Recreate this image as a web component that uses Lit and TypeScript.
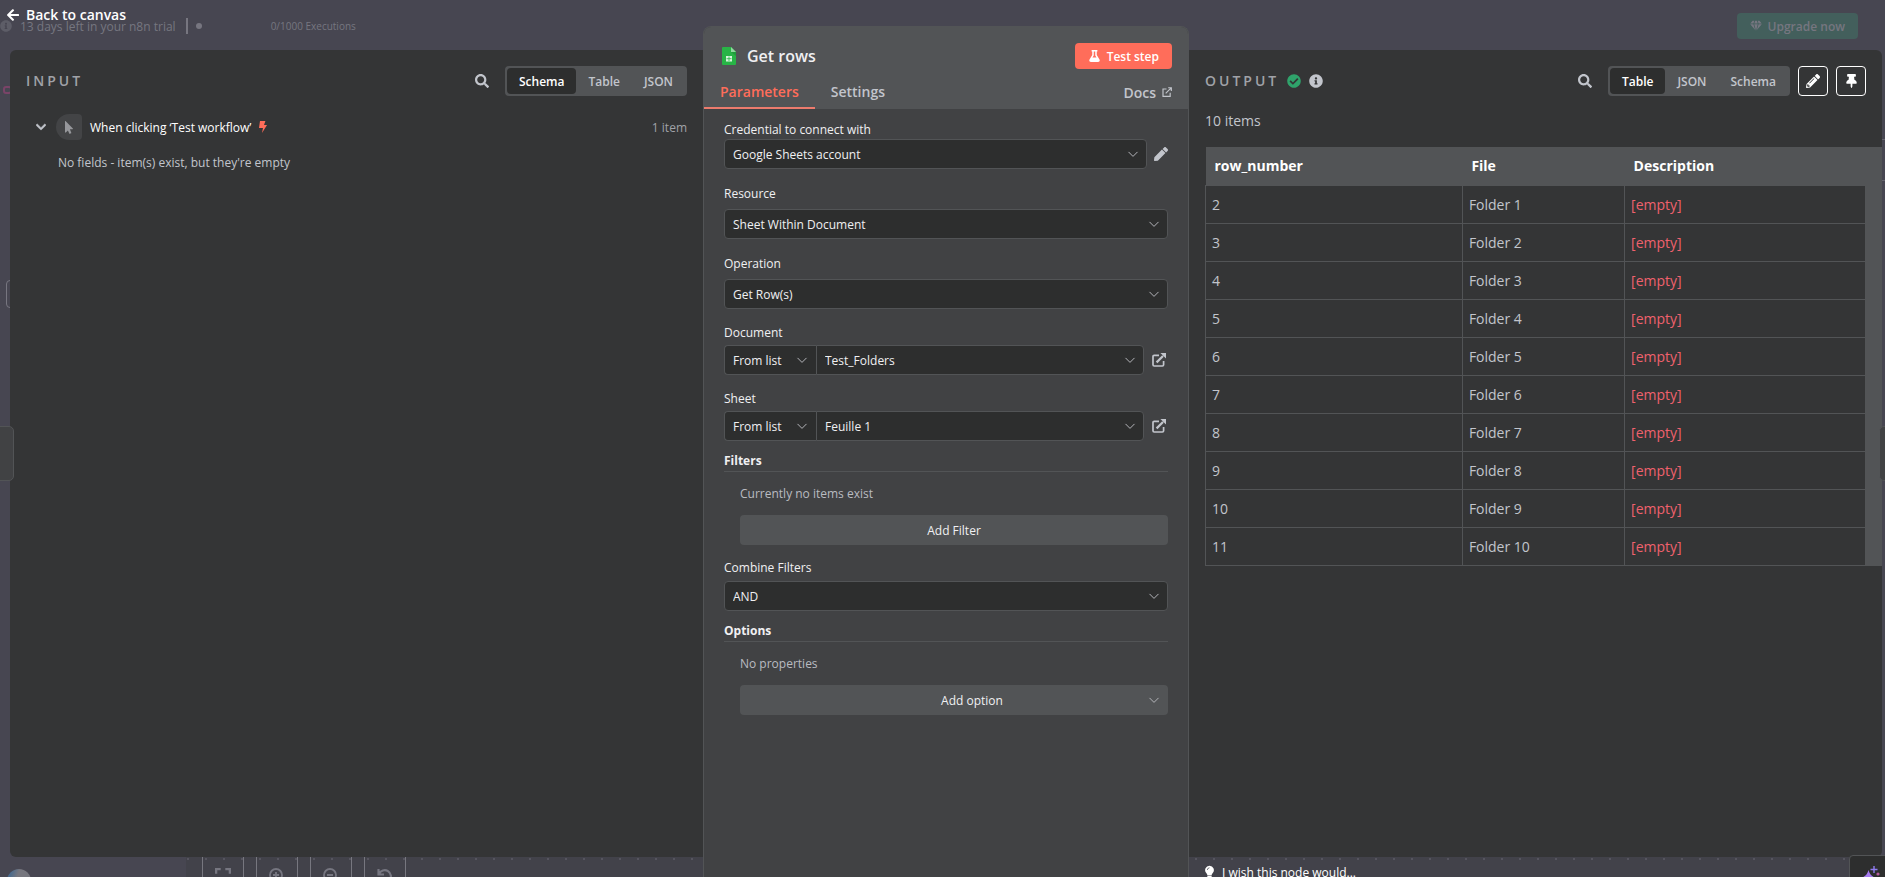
import { LitElement, html, css, svg, nothing } from "lit";
import { customElement, property, state } from "lit/decorators.js";
import { classMap } from "lit/directives/class-map.js";

const icons: Record<string, { box: string; body: unknown }> = {
  arrowLeft: {
    box: "0 0 448 512",
    body: svg`<path d="M257.5 445.1l-22.2 22.2c-9.4 9.4-24.6 9.4-33.9 0L7 273c-9.4-9.4-9.4-24.6 0-33.9L201.4 44.7c9.4-9.4 24.6-9.4 33.9 0l22.2 22.2c9.5 9.5 9.3 25-.4 34.3L136.6 216H424c13.3 0 24 10.7 24 24v32c0 13.3-10.7 24-24 24H136.6l120.5 114.8c9.8 9.3 10 24.8.4 34.3z"/>`,
  },
  search: {
    box: "0 0 512 512",
    body: svg`<path d="M505 442.7L405.3 343c-4.5-4.5-10.6-7-17-7H372c27.6-35.3 44-79.7 44-128C416 93.1 322.9 0 208 0S0 93.1 0 208s93.1 208 208 208c48.3 0 92.7-16.4 128-44v16.3c0 6.4 2.5 12.5 7 17l99.7 99.7c9.4 9.4 24.6 9.4 33.9 0l28.3-28.3c9.4-9.4 9.4-24.6.1-34zM208 336c-70.7 0-128-57.2-128-128 0-70.7 57.2-128 128-128 70.7 0 128 57.2 128 128 0 70.7-57.2 128-128 128z"/>`,
  },
  check: {
    box: "0 0 512 512",
    body: svg`<path d="M504 256c0 136.967-111.033 248-248 248S8 392.967 8 256 119.033 8 256 8s248 111.033 248 248zM227.314 387.314l184-184c6.248-6.248 6.248-16.379 0-22.627l-22.627-22.627c-6.248-6.249-16.379-6.249-22.628 0L216 308.118l-70.059-70.059c-6.248-6.248-16.379-6.248-22.628 0l-22.627 22.627c-6.248 6.248-6.248 16.379 0 22.627l104 104c6.249 6.249 16.379 6.249 22.628.001z"/>`,
  },
  info: {
    box: "0 0 512 512",
    body: svg`<path d="M256 8C119.043 8 8 119.083 8 256c0 136.997 111.043 248 248 248s248-111.003 248-248C504 119.083 392.957 8 256 8zm0 110c23.196 0 42 18.804 42 42s-18.804 42-42 42-42-18.804-42-42 18.804-42 42-42zm56 254c0 6.627-5.373 12-12 12h-88c-6.627 0-12-5.373-12-12v-24c0-6.627 5.373-12 12-12h12v-64h-12c-6.627 0-12-5.373-12-12v-24c0-6.627 5.373-12 12-12h64c6.627 0 12 5.373 12 12v100h12c6.627 0 12 5.373 12 12v24z"/>`,
  },
  pencil: {
    box: "0 0 512 512",
    body: svg`<path d="M497.9 142.1l-46.1 46.1c-4.7 4.7-12.3 4.7-17 0l-111-111c-4.7-4.7-4.7-12.3 0-17l46.1-46.1c18.7-18.7 49.1-18.7 67.9 0l60.1 60.1c18.8 18.7 18.8 49.1 0 67.9zM284.2 99.8L21.6 362.4.4 483.9c-2.9 16.4 11.4 30.6 27.8 27.8l121.5-21.3 262.6-262.6c4.7-4.7 4.7-12.3 0-17l-111-111c-4.8-4.7-12.4-4.7-17.1 0zM124.1 339.9c-5.5-5.5-5.5-14.3 0-19.8l154-154c5.5-5.5 14.3-5.5 19.8 0s5.5 14.3 0 19.8l-154 154c-5.5 5.5-14.3 5.5-19.8 0zM88 424h48v36.3l-64.5 11.3-31.1-31.1L51.7 376H88v48z"/>`,
  },
  pen: {
    box: "0 0 512 512",
    body: svg`<path d="M290.74 93.24l128.02 128.02-277.99 277.99-114.14 12.6C11.35 513.54-1.56 500.62.14 485.34l12.7-114.22 277.9-277.88zm207.2-19.06l-60.11-60.11c-18.75-18.75-49.16-18.75-67.91 0l-56.55 56.55 128.02 128.02 56.55-56.55c18.75-18.76 18.75-49.16 0-67.91z"/>`,
  },
  pin: {
    box: "0 0 384 512",
    body: svg`<path d="M298.028 214.267L285.793 96H328c13.255 0 24-10.745 24-24V24c0-13.255-10.745-24-24-24H56C42.745 0 32 10.745 32 24v48c0 13.255 10.745 24 24 24h42.207L85.972 214.267C37.465 236.82 0 277.261 0 328c0 13.255 10.745 24 24 24h136v104.007c0 1.242.289 2.467.845 3.578l24 48c2.941 5.882 11.364 5.893 14.311 0l24-48a8.008 8.008 0 0 0 .845-3.578V352h136c13.255 0 24-10.745 24-24-.001-51.183-37.983-91.42-85.973-113.733z"/>`,
  },
  flask: {
    box: "0 0 448 512",
    body: svg`<path d="M437.2 403.5L320 215V64h8c13.3 0 24-10.7 24-24V24c0-13.3-10.7-24-24-24H120c-13.3 0-24 10.7-24 24v16c0 13.3 10.7 24 24 24h8v151L10.800 403.500C-18.500 450.600 15.300 512 70.900 512h306.200c55.700 0 89.400-61.500 60.100-108.500zM137.900 320l48.200-77.600c3.700-5.200 5.800-11.600 5.800-18.400V64h64v160c0 6.900 2.200 13.200 5.800 18.400l48.200 77.600h-172z"/>`,
  },
  pointer: {
    box: "0 0 320 512",
    body: svg`<path d="M302.189 329.126H196.105l55.831 135.993c3.889 9.428-.555 19.999-9.444 23.999l-49.165 21.427c-9.165 4-19.443-.571-23.332-9.714l-53.053-129.136-86.664 89.138C18.729 472.71 0 463.554 0 447.977V18.299C0 1.899 19.921-6.096 30.277 5.443l284.412 292.542c11.472 11.179 3.007 31.141-12.5 31.141z"/>`,
  },
  chevron: {
    box: "0 0 448 512",
    body: svg`<path d="M207.029 381.476L12.686 187.132c-9.373-9.373-9.373-24.569 0-33.941l22.667-22.667c9.357-9.357 24.522-9.375 33.901-.04L224 284.505l154.745-154.021c9.379-9.335 24.544-9.317 33.901.04l22.667 22.667c9.373 9.373 9.373 24.569 0 33.941L240.971 381.476c-9.373 9.372-24.569 9.372-33.942 0z" stroke="currentColor" stroke-width="24"/>`,
  },
  caret: {
    box: "0 0 12 12",
    body: svg`<path d="M1.500 3.900l4.500 4.500 4.500-4.500" fill="none" stroke="currentColor" stroke-width="1"/>`,
  },
  bolt: { box: "0 0 8 12", body: svg`<path d="M1 0h5.400L5 4h3L3 12l1-5H0z"/>` },
  external: {
    box: "0 0 14 14",
    body: svg`<path d="M7 2.400H2.200Q1 2.400 1 3.600v8.200Q1 13 2.200 13h8.200q1.200 0 1.200-1.200V8" fill="none" stroke="currentColor" stroke-width="1.700"/><path d="M4.600 9.400l6.400-6.400" fill="none" stroke="currentColor" stroke-width="2.200"/><path d="M8.400 0H14v5.600z"/>`,
  },
  docs: {
    box: "0 0 12 12",
    body: svg`<path d="M5.400 2.400H1.200v8.800h8.600V6.800M4.400 7.600l6.600-6.600M7.400.9h3.800v3.800" fill="none" stroke="currentColor" stroke-width="1.400"/>`,
  },
  gem: {
    box: "0 0 14 12",
    body: svg`<path d="M3 0h2L4 3.200H.3zM6 0h2l1 3.200H5zM9 0h2l2.700 3.200H10zM.3 4H4l2 6.600zM5 4h4l-2 7.400zM10 4h3.700L8 10.600z"/>`,
  },
  bulb: {
    box: "0 0 10 14",
    body: svg`<path d="M5 0a4.800 4.800 0 0 1 3.600 8Q7.600 9.200 7.400 10.200H2.600Q2.400 9.200 1.400 8A4.800 4.800 0 0 1 5 0zM2.600 11h4.800v1.600L6.500 14h-3l-.9-1.400z"/><path d="M2.500 4.800Q2.700 2.500 5 2.300" stroke="#42424a" stroke-width=".8" fill="none"/>`,
  },
  sheet: {
    box: "0 0 14 18",
    body: svg`<path fill="#28b446" d="M1 0h8l5 5v12q0 1-1 1H1q-1 0-1-1V1q0-1 1-1z"/><path fill="#8fd99d" d="M9 0l5 5H9z"/><path fill="#219b3b" d="M9 5h5v4z"/><rect x="4" y="9" width="6" height="5.500" fill="#d8f5dd"/><path d="M4.500 11.700h5M7 9.500v4.500" stroke="#28b446" stroke-width=".8"/>`,
  },
  fit: {
    box: "0 0 14 14",
    body: svg`<path d="M1 5V1h4M9 1h4v4M13 9v4H9M5 13H1V9" fill="none" stroke="currentColor" stroke-width="2"/>`,
  },
  zoomIn: {
    box: "0 0 16 16",
    body: svg`<path d="M7 1a6 6 0 1 0 0 12A6 6 0 0 0 7 1zM11.500 11.500L15 15M4 7h6M7 4v6" fill="none" stroke="currentColor" stroke-width="1.800"/>`,
  },
  zoomOut: {
    box: "0 0 16 16",
    body: svg`<path d="M7 1a6 6 0 1 0 0 12A6 6 0 0 0 7 1zM11.500 11.500L15 15M4 7h6" fill="none" stroke="currentColor" stroke-width="1.800"/>`,
  },
  undo: {
    box: "0 0 16 16",
    body: svg`<path d="M1.500 1v5.500H7M2 6a6.200 6.200 0 1 1 1 6.500" fill="none" stroke="currentColor" stroke-width="2.200"/>`,
  },
  sparkle: {
    box: "0 0 20 20",
    body: svg`<path fill="#a67bf0" d="M8.500 4q1.500 6.500 8 8-6.500 1.500-8 8-1.500-6.500-8-8 6.500-1.500 8-8z"/><path d="M14 0v7M10.500 3.500h7" stroke="#8f7bf0" stroke-width="1.400"/><circle cx="18" cy="8" r="1.600" fill="#b45a9c"/>`,
  },
};

const icon = (name: string, width: number, height = width) => html`
  <svg class="icon" viewBox=${icons[name].box} width=${width} height=${height} fill="currentColor" aria-hidden="true">
    ${icons[name].body}
  </svg>
`;

const base = css`
  * {
    box-sizing: border-box;
  }
  .icon {
    display: block;
    flex: none;
  }
  button,
  select {
    font: inherit;
    color: inherit;
    margin: 0;
    border: 0;
    background: none;
  }
  button {
    padding: 0;
    cursor: pointer;
  }
  a {
    color: inherit;
    text-decoration: none;
  }
  h1,
  h2,
  h3,
  p {
    margin: 0;
    font: inherit;
  }
`;

@customElement("view-switch")
class ViewSwitch extends LitElement {
  @property({ attribute: false }) views: string[] = [];
  @property() active = "";

  static styles = [
    base,
    css`
      :host {
        display: block;
      }
      .group {
        display: flex;
        height: 30px;
        padding: 2px;
        border-radius: 4px;
        background: #525456;
      }
      .view {
        padding: 0 12px;
        border-radius: 4px;
        font-size: 12px;
        font-weight: 600;
        color: #c2c5cc;
      }
      .on {
        background: #2d2e2e;
        color: #fff;
      }
    `,
  ];

  render() {
    return html`<div class="group" role="radiogroup" aria-label="Display mode">
      ${this.views.map(
        (v) => html`<button
          class=${classMap({ view: true, on: v === this.active })}
          role="radio"
          aria-checked=${v === this.active}
          @click=${() => (this.active = v)}
        >${v}</button>`
      )}
    </div>`;
  }
}

@customElement("canvas-backdrop")
class CanvasBackdrop extends LitElement {
  static styles = [
    base,
    css`
      :host {
        display: block;
        position: absolute;
        inset: 0;
        overflow: hidden;
        background: #474651;
        color: #767680;
      }
      .trial {
        display: flex;
        align-items: center;
        height: 52px;
        padding: 0 27px 0 0;
        font-size: 12px;
      }
      .badge {
        margin-right: 8px;
        color: #5d5d67;
      }
      .meter {
        display: flex;
        align-items: center;
        width: 75px;
        height: 16px;
        margin: 0 10px;
        padding-left: 8px;
        border-left: 2px solid #777680;
      }
      .dot {
        width: 6px;
        height: 6px;
        border-radius: 3px;
        background: #777680;
      }
      .runs {
        font-size: 10px;
      }
      .upgrade {
        display: flex;
        align-items: center;
        gap: 6px;
        height: 26px;
        margin-left: auto;
        padding: 0 13px;
        border-radius: 4px;
        background: #435f5c;
        font-weight: 600;
      }
      .board {
        position: absolute;
        left: 186px;
        right: 0;
        bottom: 0;
        height: 20px;
        background: radial-gradient(circle at 2px 2px, #56555f 1px, #42424a 1px) 0 0 / 18px 20px;
      }
      .tools {
        display: flex;
        gap: 12px;
        padding-left: 16px;
      }
      .tool {
        display: flex;
        justify-content: center;
        width: 42px;
        height: 42px;
        padding-top: 11px;
        border: 1px solid #77777f;
        border-top: 0;
      }
      .avatar {
        position: absolute;
        left: 7px;
        bottom: -16px;
        width: 24px;
        height: 24px;
        border-radius: 12px;
        background: linear-gradient(110deg, #4a6a8c 15%, #77777f 40%);
      }
      .node {
        position: absolute;
        left: 6px;
        top: 280px;
        width: 20px;
        height: 28px;
        border: 1px solid #777680;
        border-radius: 4px;
      }
      .ring {
        position: absolute;
        left: 3px;
        top: 86px;
        width: 9px;
        height: 8px;
        border: 2px solid #7a4468;
        border-radius: 3px;
      }
      .rail {
        position: absolute;
        right: 0;
        top: 139px;
        width: 3px;
        height: 42px;
        border: 1px solid #66656f;
        border-width: 1px 0;
      }
    `,
  ];

  render() {
    return html`
      <div class="trial">
        <span class="badge">${icon("info", 12)}</span>
        <span>13 days left in your n8n trial</span>
        <span class="meter"><span class="dot"></span></span>
        <span class="runs">0/1000 Executions</span>
        <button class="upgrade">${icon("gem", 12)}Upgrade now</button>
      </div>
      <span class="ring"></span><span class="node"></span><span class="rail"></span>
      <div class="board">
        <div class="tools">
          <button class="tool" aria-label="Fit view">${icon("fit", 16)}</button>
          <button class="tool" aria-label="Zoom in">${icon("zoomIn", 16)}</button>
          <button class="tool" aria-label="Zoom out">${icon("zoomOut", 16)}</button>
          <button class="tool" aria-label="Undo">${icon("undo", 16)}</button>
        </div>
      </div>
      <span class="avatar"></span>
    `;
  }
}

@customElement("input-panel")
class InputPanel extends LitElement {
  static styles = [
    base,
    css`
      :host {
        display: block;
        padding: 16px;
        border-radius: 6px 0 0 6px;
        background: #343536;
        color: #c2c5cc;
        font-size: 12px;
      }
      .head {
        display: flex;
        align-items: center;
        gap: 16px;
        height: 30px;
      }
      .title {
        flex: 1;
        font-size: 14px;
        font-weight: 600;
        line-height: 20px;
        letter-spacing: 3px;
        color: #a0a2a8;
      }
      .node {
        display: flex;
        align-items: center;
        height: 26px;
        margin-top: 18px;
        padding-left: 10px;
      }
      .avatar {
        display: grid;
        place-items: center;
        width: 26px;
        height: 26px;
        margin: 0 8px 0 10px;
        border-radius: 13px 4px 4px 13px;
        background: #434446;
        color: #96979b;
      }
      .name {
        font-weight: 500;
        color: #fff;
      }
      .bolt {
        margin-left: 8px;
        color: #ff6d5a;
      }
      .count {
        margin-left: auto;
        color: #a0a2a8;
      }
      .empty {
        margin: 14px 0 0 32px;
        line-height: 18px;
      }
    `,
  ];

  render() {
    return html`
      <div class="head">
        <h2 class="title">INPUT</h2>
        <button aria-label="Search input">${icon("search", 14)}</button>
        <view-switch .views=${["Schema", "Table", "JSON"]} active="Schema"></view-switch>
      </div>
      <div class="node">
        <button aria-label="Collapse">${icon("chevron", 10, 12)}</button>
        <span class="avatar">${icon("pointer", 8, 13)}</span>
        <span class="name">When clicking ‘Test workflow’</span>
        <span class="bolt">${icon("bolt", 8, 12)}</span>
        <span class="count">1 item</span>
      </div>
      <p class="empty">No fields - item(s) exist, but they're empty</p>
    `;
  }
}

@customElement("node-settings")
class NodeSettings extends LitElement {
  @state() private tab = "Parameters";

  static styles = [
    base,
    css`
      :host {
        display: block;
        border: 1px solid #525456;
        border-bottom: 0;
        border-radius: 8px 8px 0 0;
        background: #414244;
        color: #f0f0f2;
        font-size: 12px;
      }
      .head {
        height: 82px;
        padding: 16px 16px 0 18px;
        border-radius: 7px 7px 0 0;
        background: #525456;
      }
      .bar {
        display: flex;
        align-items: center;
        height: 26px;
      }
      .title {
        flex: 1;
        margin-left: 11px;
        font-size: 16px;
        font-weight: 600;
        line-height: 24px;
      }
      .test {
        display: flex;
        align-items: center;
        gap: 7px;
        height: 26px;
        padding: 0 13px 0 14px;
        border-radius: 4px;
        background: #ff6d5a;
        color: #fff;
        font-weight: 600;
      }
      .tabs {
        display: flex;
        height: 40px;
        margin-left: -18px;
        font-size: 14px;
        font-weight: 600;
        color: #c2c5cc;
      }
      .tab {
        padding: 8px 16px 0;
        border-bottom: 2px solid transparent;
        line-height: 20px;
        font-weight: 600;
      }
      .on {
        border-color: #ec7b6d;
        color: #ff6d5a;
      }
      .docs {
        display: flex;
        align-items: center;
        gap: 6px;
        margin-left: auto;
        padding-top: 6px;
      }
      .form {
        display: grid;
        padding: 10px 20px;
      }
      .field {
        display: grid;
      }
      .label {
        height: 20px;
        line-height: 22px;
        font-weight: 500;
      }
      .row {
        display: flex;
        align-items: center;
      }
      .spaced {
        margin-top: 14px;
        gap: 6px;
      }
      .close {
        margin-top: 13px;
        gap: 3px;
      }
      .after {
        margin-top: 12px;
        gap: 4px;
      }
      .pick {
        display: grid;
        flex: 1;
        align-items: center;
      }
      .pick > * {
        grid-area: 1 / 1;
      }
      .pick > .icon {
        justify-self: end;
        margin-right: 8px;
        color: #b4b5ba;
        pointer-events: none;
      }
      .select {
        appearance: none;
        width: 100%;
        height: 30px;
        padding: 0 8px;
        border: 1px solid #525456;
        border-radius: 4px;
        background: #2d2e2e;
        font-weight: 500;
      }
      .mode {
        flex: none;
        width: 92px;
      }
      .mode .select {
        border-right: 0;
        border-radius: 4px 0 0 4px;
      }
      .value .select {
        border-radius: 0 4px 4px 0;
      }
      .side {
        color: #c2c5cc;
      }
      .pen {
        margin: 0 0 0 7px;
      }
      .open {
        margin: 0 2px 0 8px;
      }
      .section {
        margin-top: 10px;
        border-bottom: 1px solid #525456;
        font-weight: 700;
        line-height: 20px;
      }
      .nested {
        display: grid;
        gap: 12px;
        margin: 13px 0 0 16px;
      }
      .none {
        line-height: 18px;
        color: #b9bbc1;
      }
      .add {
        height: 30px;
        border: 0;
        border-radius: 4px;
        background: #525456;
        font-weight: 500;
      }
      .add.select {
        padding-left: 44px;
        text-align: center;
        text-align-last: center;
      }
    `,
  ];

  private pick(id: string, label: string, value: string, kind = "") {
    return html`<div class="pick ${kind}">
      <select id=${id} class="select" aria-label=${label || nothing}>
        <option>${value}</option>
      </select>
      ${icon("caret", 12)}
    </div>`;
  }

  private locator(id: string, label: string, value: string) {
    return html`<div class="field close">
      <label class="label" for=${id}>${label}</label>
      <div class="row">
        ${this.pick(id + "-mode", label + " mode", "From list", "mode")}
        ${this.pick(id, "", value, "value")}
        <a class="side open" href="#" aria-label="Open ${label}">${icon("external", 14)}</a>
      </div>
    </div>`;
  }

  render() {
    return html`
      <header class="head">
        <div class="bar">
          ${icon("sheet", 14, 18)}
          <h1 class="title">Get rows</h1>
          <button class="test">${icon("flask", 11, 12)}Test step</button>
        </div>
        <nav class="tabs">
          ${["Parameters", "Settings"].map(
            (t) => html`<button class=${classMap({ tab: true, on: t === this.tab })} @click=${() => (this.tab = t)}>${t}</button>`
          )}
          <a class="docs" href="#">Docs ${icon("docs", 10)}</a>
        </nav>
      </header>
      <div class="form">
        <div class="field">
          <label class="label" for="credential">Credential to connect with</label>
          <div class="row">
            ${this.pick("credential", "", "Google Sheets account")}
            <button class="side pen" aria-label="Edit credential">${icon("pen", 14)}</button>
          </div>
        </div>
        <div class="field spaced">
          <label class="label" for="resource">Resource</label>
          ${this.pick("resource", "", "Sheet Within Document")}
        </div>
        <div class="field spaced">
          <label class="label" for="operation">Operation</label>
          ${this.pick("operation", "", "Get Row(s)")}
        </div>
        ${this.locator("document", "Document", "Test_Folders")}
        ${this.locator("sheet", "Sheet", "Feuille 1")}
        <h3 class="section">Filters</h3>
        <div class="nested">
          <p class="none">Currently no items exist</p>
          <button class="add">Add Filter</button>
        </div>
        <div class="field after">
          <label class="label" for="combine">Combine Filters</label>
          ${this.pick("combine", "", "AND")}
        </div>
        <h3 class="section">Options</h3>
        <div class="nested">
          <p class="none">No properties</p>
          <div class="pick">
            <select class="select add" aria-label="Add option">
              <option>Add option</option>
            </select>
            ${icon("caret", 12)}
          </div>
        </div>
      </div>
    `;
  }
}

@customElement("output-panel")
class OutputPanel extends LitElement {
  @state() private rows = Array.from({ length: 10 }, (_, i) => ({ row: i + 2, file: `Folder ${i + 1}` }));

  static styles = [
    base,
    css`
      :host {
        display: block;
        padding: 16px 0 0 16px;
        border-radius: 0 6px 6px 0;
        background: #343536;
        color: #c2c5cc;
        font-size: 14px;
      }
      .head {
        display: flex;
        align-items: center;
        gap: 8px;
        height: 30px;
        padding-right: 16px;
      }
      .title {
        font-weight: 600;
        line-height: 20px;
        letter-spacing: 3px;
        color: #a0a2a8;
      }
      .ok {
        color: #2fa36b;
      }
      .search {
        margin: 0 8px 0 auto;
      }
      .square {
        display: grid;
        place-items: center;
        width: 30px;
        height: 30px;
        border: 1px solid #fff;
        border-radius: 4px;
        color: #fff;
      }
      .count {
        margin: 15px 0 16px;
        line-height: 20px;
      }
      .table {
        width: 100%;
        table-layout: fixed;
        border-collapse: collapse;
      }
      .table th {
        height: 38px;
        padding: 0 9px;
        background: #525456;
        color: #fff;
        font-weight: 700;
        text-align: left;
      }
      .table td {
        height: 38px;
        padding: 0 6px;
        border: 1px solid #525456;
      }
      .c1 {
        width: 38%;
      }
      .c2 {
        width: 24%;
      }
      .c4 {
        width: 16px;
      }
      .table .gutter {
        padding: 0;
        background: #525456;
      }
      .table .blank {
        color: #f0616d;
      }
    `,
  ];

  render() {
    return html`
      <div class="head">
        <h2 class="title">OUTPUT</h2>
        <span class="ok">${icon("check", 14)}</span>
        <span>${icon("info", 14)}</span>
        <button class="search" aria-label="Search output">${icon("search", 14)}</button>
        <view-switch .views=${["Table", "JSON", "Schema"]} active="Table"></view-switch>
        <button class="square" aria-label="Edit output">${icon("pencil", 14)}</button>
        <button class="square" aria-label="Pin data">${icon("pin", 11, 14)}</button>
      </div>
      <p class="count">10 items</p>
      <table class="table">
        <colgroup>
          <col class="c1" />
          <col class="c2" />
          <col />
          <col class="c4" />
        </colgroup>
        <thead>
          <tr>
            <th>row_number</th>
            <th>File</th>
            <th>Description</th>
            <th class="gutter"></th>
          </tr>
        </thead>
        <tbody>
          ${this.rows.map(
            (r) => html`<tr>
              <td>${r.row}</td>
              <td>${r.file}</td>
              <td class="blank">[empty]</td>
              <td class="gutter"></td>
            </tr>`
          )}
        </tbody>
      </table>
    `;
  }
}

@customElement("app-root")
class AppRoot extends LitElement {
  static styles = [
    base,
    css`
      :host {
        display: block;
        position: relative;
        height: 100vh;
        overflow: hidden;
        font-family: "Open Sans", "Noto Sans", sans-serif;
        font-size: 12px;
        color: #fff;
      }
      .layout {
        position: relative;
        display: grid;
        grid-template-columns: 1fr 486px 1fr;
        grid-template-rows: 50px 1fr 20px;
        height: 100%;
        padding: 0 3px 0 10px;
      }
      .back {
        justify-self: start;
        align-self: start;
        display: flex;
        align-items: center;
        gap: 7px;
        margin: 5px 0 0 -3px;
        font-size: 14px;
        font-weight: 600;
        line-height: 20px;
      }
      .input {
        grid-area: 2 / 1;
      }
      .settings {
        grid-area: 1 / 2 / 4 / 3;
        margin-top: 26px;
      }
      .output {
        grid-area: 2 / 3;
      }
      .wish {
        grid-area: 3 / 3;
        display: flex;
        align-items: start;
        gap: 8px;
        padding: 8px 0 0 16px;
        line-height: 16px;
        font-weight: 500;
      }
      .handle {
        position: absolute;
        top: 426px;
        width: 15px;
        height: 55px;
        border: 1px solid #525456;
        background: #414244;
      }
      .left {
        left: -1px;
        border-radius: 0 5px 5px 0;
      }
      .right {
        right: -9px;
        border-radius: 5px 0 0 5px;
      }
      .assistant {
        position: absolute;
        right: -6px;
        bottom: -20px;
        display: flex;
        justify-content: center;
        width: 42px;
        height: 42px;
        padding-top: 10px;
        border: 1px solid #525456;
        border-radius: 4px;
        background: #2d2e2e;
      }
    `,
  ];

  render() {
    return html`
      <canvas-backdrop></canvas-backdrop>
      <main class="layout">
        <button class="back">${icon("arrowLeft", 12, 14)}Back to canvas</button>
        <input-panel class="input"></input-panel>
        <node-settings class="settings"></node-settings>
        <output-panel class="output"></output-panel>
        <a class="wish" href="#">${icon("bulb", 9, 14)}I wish this node would...</a>
      </main>
      <span class="handle left"></span>
      <span class="handle right"></span>
      <button class="assistant" aria-label="Ask assistant">${icon("sparkle", 20)}</button>
    `;
  }
}
